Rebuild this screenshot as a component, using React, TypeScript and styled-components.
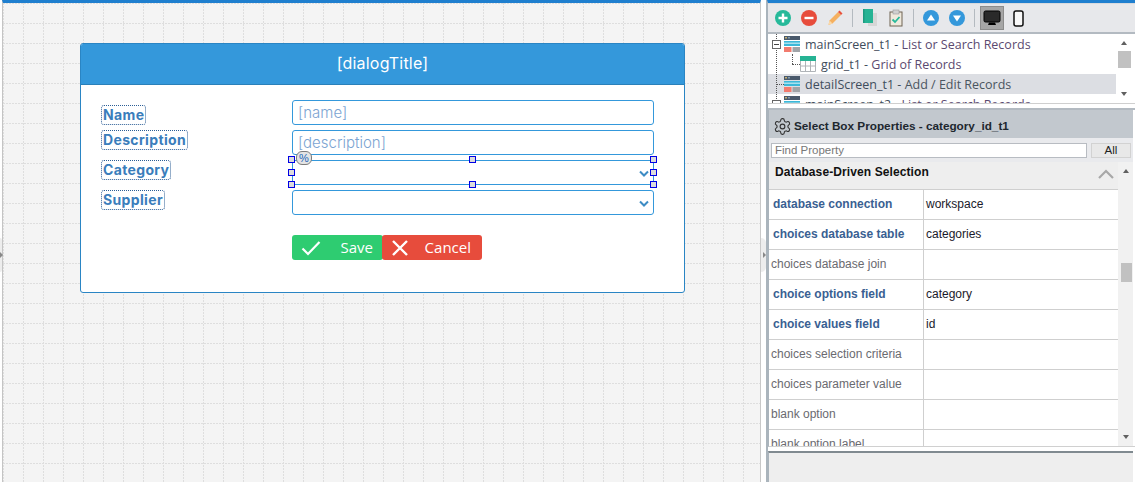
import React from "react";
import styled, { createGlobalStyle } from "styled-components";

const Global = createGlobalStyle`
  html, body { margin: 0; padding: 0; height: 482px; overflow: hidden; background: #fff; }
  #root { height: 482px; }
  * { box-sizing: border-box; }
`;

const Page = styled.div`
  position: relative;
  display: flex;
  width: 1135px;
  height: 482px;
  overflow: hidden;
  padding-left: 2px;
`;

const Canvas = styled.div`
  flex: 0 0 759px;
  height: 482px;
  padding: 40px 0 0 77px;
  border-left: 1px solid #c4c4c4;
  border-right: 1px solid #c8c8c8;
  border-top: 3px solid #1f7fcf;
  background-color: #f4f4f4;
  background-image:
    conic-gradient(at 2px 1px, transparent 270deg, #dedede 270deg),
    conic-gradient(at 1px 2px, transparent 270deg, #dedede 270deg);
  background-size: 3px 20px, 20px 3px;
  background-position: 0 0, 0 0;
`;

const Dialog = styled.div`
  width: 605px;
  height: 250px;
  background: #fff;
  border: 1px solid #2a85c4;
  border-radius: 3px;
`;

const DialogTitle = styled.div`
  height: 41px;
  background: #3498db;
  border-bottom: 1px solid #2a80b9;
  border-radius: 2px 2px 0 0;
  color: #fff;
  font: 400 16px/39px Inter, sans-serif;
  letter-spacing: 0.2px;
  text-align: center;
`;

const FormBody = styled.div`
  padding: 15px 30px 0 20px;
  display: flex;
  flex-direction: column;
`;

const FormRow = styled.div`
  display: grid;
  grid-template-columns: 191px 362px;
  height: 30px;
  align-items: start;
`;

const Label = styled.span<{ $top?: number }>`
  justify-self: start;
  height: 20px;
  margin-top: ${(p) => p.$top ?? 0}px;
  padding: 0 1px;
  border: 1px dotted #2c5e96;
  border-radius: 3px;
  color: #3a7dbb;
  font: 700 14px/18px Inter, sans-serif;
  letter-spacing: 0.35px;
`;

const Field = styled.div`
  position: relative;
  height: 25px;
  border: 1px solid #3498db;
  border-radius: 3px;
  padding-left: 5px;
  color: #7ba4d2;
  background: #fff;
  font: 300 15px/24px Inter, sans-serif;
`;

const Chevron = styled.svg`
  position: absolute;
  right: 4px;
  top: 50%;
  margin-top: -3px;
  width: 10px;
  height: 7px;
`;

const Handle = styled.i<{ $x: number; $y: number }>`
  position: absolute;
  left: ${(p) => p.$x}px;
  top: ${(p) => p.$y}px;
  margin: -3px 0 0 -3px;
  width: 7px;
  height: 7px;
  border: 1px solid #0000e6;
  background: #dcdcdc;
`;

const PercentBadge = styled.span`
  position: absolute;
  left: 3px;
  top: -10px;
  width: 16px;
  height: 14px;
  border: 1px solid #7c7c7c;
  border-radius: 6px;
  background: #e4e4e4;
  color: #2266bb;
  font: 400 11px/12px "Liberation Sans", sans-serif;
  text-align: center;
  z-index: 2;
`;

const Buttons = styled.div`
  display: flex;
  margin: 15px 0 0 191px;
`;

const FormButton = styled.button<{ $bg: string; $w: number; $pad: number; $overlap?: boolean }>`
  display: flex;
  align-items: center;
  justify-content: space-between;
  width: ${(p) => p.$w}px;
  height: 25px;
  margin-left: ${(p) => (p.$overlap ? -1 : 0)}px;
  padding: 0 ${(p) => p.$pad}px 0 9px;
  border: 0;
  border-radius: 3px;
  background: ${(p) => p.$bg};
  color: #fff;
  font: 400 15px/25px "Open Sans", sans-serif;
`;

const Splitter = styled.div`
  flex: 0 0 6px;
  height: 482px;
  background: #fff;
  border-right: 1px solid #aab4bc;
`;

const SplitTab = styled.span<{ $left: number; $w: number }>`
  position: absolute;
  left: ${(p) => p.$left}px;
  top: 238px;
  width: ${(p) => p.$w}px;
  height: 34px;
  border-radius: 0 5px 5px 0;
  background: #ededed;
  &::after {
    content: "";
    position: absolute;
    left: ${(p) => (p.$w > 3 ? 2 : 0)}px;
    top: 14px;
    border-left: 3px solid #888;
    border-top: 3px solid transparent;
    border-bottom: 3px solid transparent;
  }
`;

const Side = styled.div`
  flex: 0 0 368px;
  height: 482px;
  display: flex;
  flex-direction: column;
  border-left: 1px solid #aab4bc;
  border-top: 3px solid #1f7fcf;
`;

const Toolbar = styled.div`
  height: 31px;
  flex: none;
  display: flex;
  align-items: center;
  padding-left: 6px;
  background: #e7e8eb;
  border-bottom: 2px solid #b3bac1;
  border-top: 1px solid #d8dade;
`;

const ToolIcon = styled.span<{ $w: number }>`
  flex: 0 0 ${(p) => p.$w}px;
  height: 24px;
  display: flex;
  align-items: center;
  justify-content: center;
`;

const ToolSep = styled.span<{ $r: number }>`
  flex: none;
  width: 1px;
  height: 18px;
  margin: 0 ${(p) => p.$r}px 0 8px;
  background: #b4bac0;
`;

const ActiveTool = styled.span`
  flex: 0 0 24px;
  height: 24px;
  display: flex;
  align-items: center;
  justify-content: center;
  background: #a6a6a6;
  border: 1px solid #8c8c8c;
`;

const TreeWrap = styled.div`
  position: relative;
  height: 69px;
  flex: none;
  overflow: hidden;
  background: #fff;
  padding-right: 18px;
`;

const TreeRow = styled.div<{ $selected?: boolean; $indent: number }>`
  position: relative;
  height: 20px;
  display: flex;
  align-items: center;
  gap: 5px;
  padding-left: ${(p) => p.$indent}px;
  background: ${(p) => (p.$selected ? "#dcdee3" : "transparent")};
  color: #3f4d5c;
  font: 400 12.5px/20px "Open Sans", sans-serif;
  white-space: nowrap;
  & > svg { flex: none; }
  & > span:last-child { margin-top: 2px; }
`;

const TreeDesc = styled.span<{ $purple?: boolean }>`
  color: ${(p) => (p.$purple ? "#5b4a70" : "#4a5560")};
`;

const ExpandBox = styled.span`
  position: absolute;
  left: 4px;
  top: 6px;
  width: 9px;
  height: 9px;
  border: 1px solid #666;
  background: #fff;
  z-index: 1;
  &::after {
    content: "";
    position: absolute;
    left: 1px;
    top: 3px;
    width: 5px;
    height: 1px;
    background: #444;
  }
`;

const DotV = styled.span`
  position: absolute;
  left: 8px;
  top: 0;
  bottom: 0;
  border-left: 1px dotted #555;
  z-index: 1;
`;

const DotH = styled.span<{ $left: number; $w: number }>`
  position: absolute;
  left: ${(p) => p.$left}px;
  top: 10px;
  width: ${(p) => p.$w}px;
  border-top: 1px dotted #555;
`;

const DotElbow = styled.span`
  position: absolute;
  left: 24px;
  top: 0;
  height: 10px;
  border-left: 1px dotted #555;
`;

const Scrollbar = styled.div<{ $bg: string; $width: number }>`
  position: absolute;
  top: 0;
  right: 2px;
  bottom: 0;
  width: ${(p) => p.$width}px;
  background: ${(p) => p.$bg};
`;

const ScrollThumb = styled.div<{ $top: number; $h: number; $l: number; $r: number }>`
  position: absolute;
  left: ${(p) => p.$l}px;
  right: ${(p) => p.$r}px;
  top: ${(p) => p.$top}px;
  height: ${(p) => p.$h}px;
  background: #c1c1c1;
`;

const ArrowUp = styled.span`
  position: absolute;
  left: 5px;
  top: 7px;
  border: 3.5px solid transparent;
  border-top: 0;
  border-bottom: 4px solid #606060;
`;

const ArrowDown = styled.span`
  position: absolute;
  left: 5px;
  bottom: 7px;
  border: 3.5px solid transparent;
  border-bottom: 0;
  border-top: 4px solid #606060;
`;

const Gap = styled.div`
  height: 7px;
  flex: none;
  background: #fff;
  border-top: 1px solid #cfcfcf;
  border-bottom: 2px solid #b3bac1;
`;

const PropsHeader = styled.div`
  flex: none;
  height: 28px;
  display: flex;
  align-items: center;
  gap: 2px;
  padding: 4px 0 0 4px;
  margin-right: 2px;
  background: #c2c8ce;
  border-left: 1px solid #aab4bc;
  color: #20272e;
  font: 700 11.75px/24px "Liberation Sans", sans-serif;
`;

const FindRow = styled.div`
  flex: none;
  height: 24px;
  display: flex;
  align-items: center;
  gap: 4px;
  padding-left: 2px;
  margin-right: 2px;
  background: #e9eaed;
  border-left: 1px solid #aab4bc;
`;

const FindInput = styled.div`
  width: 316px;
  height: 15px;
  border: 1px solid #b8bcc2;
  background: #fff;
  color: #777;
  padding-left: 3px;
  font: 400 11.5px/13px "Liberation Sans", sans-serif;
`;

const AllButton = styled.div`
  width: 40px;
  height: 15px;
  background: #e8e8e8;
  border: 1px solid #d2d2d2;
  color: #222;
  text-align: center;
  font: 400 11.5px/13px "Liberation Sans", sans-serif;
`;

const PropsArea = styled.div`
  position: relative;
  height: 285px;
  flex: none;
  overflow: hidden;
  border-left: 1px solid #aab4bc;
  padding-right: 16px;
  border-bottom: 1px solid #d0d0d0;
`;

const SectionHead = styled.div`
  position: relative;
  height: 28px;
  padding-left: 6px;
  background: #eeeeee;
  color: #111;
  font: 700 12px/20px "Liberation Sans", sans-serif;
  border-bottom: 1px solid #cfcfcf;
  border-right: 1px solid #cfcfcf;
  letter-spacing: 0.1px;
`;

const Collapse = styled.svg`
  position: absolute;
  right: 3px;
  top: 6px;
  width: 18px;
  height: 12px;
`;

const PropRow = styled.div`
  display: grid;
  grid-template-columns: 155px 1fr;
  height: 30px;
  background: #fff;
  border-bottom: 1px solid #cfcfcf;
  border-right: 1px solid #cfcfcf;
`;

const PropName = styled.div<{ $set?: boolean }>`
  padding-left: ${(p) => (p.$set ? 4 : 2)}px;
  border-right: 1px solid #cfcfcf;
  color: ${(p) => (p.$set ? "#3a5f92" : "#6a6a70")};
  font: ${(p) => (p.$set ? 700 : 400)} 12px/29px "Liberation Sans", sans-serif;
  white-space: nowrap;
`;

const PropValue = styled.div`
  padding-left: 2px;
  color: #1a1a2a;
  font: 400 12px/29px "Liberation Sans", sans-serif;
`;

const Footer = styled.div`
  flex: 1;
  margin: 4px 2px 0 0;
  background: #eeeeee;
  border-top: 2px solid #808a90;
  border-left: 1px solid #aab4bc;
`;

const Round = ({ color, children }: { color: string; children: React.ReactNode }) => (
  <svg width="18" height="18" viewBox="0 0 18 18">
    <circle cx="9" cy="9" r="8" fill={color} />
    {children}
  </svg>
);

const ScreenIcon = () => (
  <svg width="16" height="16" viewBox="0 0 16 16">
    <rect x="0" y="0" width="16" height="4" fill="#4a5a6c" />
    <rect x="1" y="1" width="2" height="1.5" fill="#c8b070" />
    <rect x="4" y="1" width="2" height="1.5" fill="#7f9ab0" />
    <rect x="0" y="5" width="16" height="5" fill="#3cb8d8" />
    <rect x="0" y="6.5" width="16" height="1.5" fill="#a8e0ee" />
    <rect x="0" y="11" width="7.5" height="5" fill="#f27b6e" />
    <rect x="8.5" y="11" width="7.5" height="5" fill="#a0a4a8" />
  </svg>
);

const GridIcon = () => (
  <svg width="16" height="16" viewBox="0 0 16 16">
    <rect x="0" y="0" width="16" height="5" fill="#26b394" />
    <path d="M.5 5v10.5h15V5M.5 10h15M5.5 5v10.5M10.5 5v10.5" fill="none" stroke="#b0b4b8" />
  </svg>
);

const ChevronIcon = () => (
  <Chevron viewBox="0 0 10 7">
    <path d="M1 1.5 5 5.5 9 1.5" fill="none" stroke="#3d8cc4" strokeWidth="2" />
  </Chevron>
);

const handles = [
  [-2, -2], [179, -2], [360, -2],
  [-2, 11], [360, 11],
  [-2, 23], [179, 23], [360, 23],
];

const props: [string, string, boolean][] = [
  ["database connection", "workspace", true],
  ["choices database table", "categories", true],
  ["choices database join", "", false],
  ["choice options field", "category", true],
  ["choice values field", "id", true],
  ["choices selection criteria", "", false],
  ["choices parameter value", "", false],
  ["blank option", "", false],
  ["blank option label", "", false],
];

export default function App() {
  return (
    <Page>
      <Global />
      <SplitTab $left={0} $w={2} />
      <Canvas>
        <Dialog>
          <DialogTitle>[dialogTitle]</DialogTitle>
          <FormBody>
            <FormRow>
              <Label $top={5}>Name</Label>
              <Field>[name]</Field>
            </FormRow>
            <FormRow>
              <Label>Description</Label>
              <Field>[description]</Field>
            </FormRow>
            <FormRow>
              <Label>Category</Label>
              <Field>
                <ChevronIcon />
                <PercentBadge>%</PercentBadge>
                {handles.map(([x, y]) => (
                  <Handle key={`${x}-${y}`} $x={x} $y={y} />
                ))}
              </Field>
            </FormRow>
            <FormRow>
              <Label>Supplier</Label>
              <Field>
                <ChevronIcon />
              </Field>
            </FormRow>
            <Buttons>
              <FormButton $bg="#2ecc71" $w={91} $pad={10}>
                <svg width="20" height="16" viewBox="0 0 20 16">
                  <path d="M1.5 8.5 7 14 18.5 2" fill="none" stroke="#fff" strokeWidth="2.2" />
                </svg>
                Save
              </FormButton>
              <FormButton $bg="#e74c3c" $w={100} $pad={11} $overlap>
                <svg width="18" height="16" viewBox="0 0 18 16">
                  <path d="M2 1 16 15M16 1 2 15" fill="none" stroke="#fff" strokeWidth="2.4" />
                </svg>
                Cancel
              </FormButton>
            </Buttons>
          </FormBody>
        </Dialog>
      </Canvas>
      <Splitter />
      <SplitTab $left={761} $w={5} />
      <Side>
        <Toolbar>
          <ToolIcon $w={18}>
            <Round color="#26b99a">
              <path d="M9 4.5v9M4.5 9h9" stroke="#fff" strokeWidth="2.4" />
            </Round>
          </ToolIcon>
          <ToolIcon $w={8} />
          <ToolIcon $w={18}>
            <Round color="#e74c3c">
              <path d="M4.5 9h9" stroke="#fff" strokeWidth="2.4" />
            </Round>
          </ToolIcon>
          <ToolIcon $w={8} />
          <ToolIcon $w={18}>
            <svg width="18" height="18" viewBox="0 0 18 18">
              <path d="M2.5 16 3.5 11.5 12 3 15 6 6.5 14.5Z" fill="#f5b060" />
              <path d="M12 3 13.5 1.5 16.5 4.5 15 6Z" fill="#e8503c" />
              <path d="M2.5 16 3.5 11.5 6.5 14.5Z" fill="#fbd9a8" />
            </svg>
          </ToolIcon>
          <ToolSep $r={7} />
          <ToolIcon $w={18}>
            <svg width="18" height="18" viewBox="0 0 18 18">
              <rect x="8" y="4" width="9" height="13" fill="#d6d6d6" />
              <rect x="3" y="0" width="10" height="14" fill="#26b394" />
              <rect x="3" y="0" width="1.5" height="14" fill="#1c9a80" />
            </svg>
          </ToolIcon>
          <ToolIcon $w={9} />
          <ToolIcon $w={18}>
            <svg width="16" height="18" viewBox="0 0 16 18">
              <rect x="2" y="3" width="12" height="14" fill="#efe9dd" stroke="#6f6252" />
              <rect x="5" y="1" width="6" height="4" fill="#d0d0d0" stroke="#999" strokeWidth=".6" />
              <path d="M4.5 10.5 7 13 11.5 8" fill="none" stroke="#26b99a" strokeWidth="1.8" />
            </svg>
          </ToolIcon>
          <ToolSep $r={8} />
          <ToolIcon $w={18}>
            <Round color="#3498db">
              <path d="M9 5.5 13 11.5H5Z" fill="#fff" />
            </Round>
          </ToolIcon>
          <ToolIcon $w={8} />
          <ToolIcon $w={18}>
            <Round color="#3498db">
              <path d="M9 12.5 13 6.5H5Z" fill="#fff" />
            </Round>
          </ToolIcon>
          <ToolSep $r={5} />
          <ActiveTool>
            <svg width="18" height="16" viewBox="0 0 18 16">
              <rect x="1" y="1" width="16" height="11" rx="1.5" fill="#2a2a2a" stroke="#000" />
              <path d="M6 12.5h6l1 2.5H5Z" fill="#000" />
            </svg>
          </ActiveTool>
          <ToolIcon $w={28}>
            <svg width="11" height="17" viewBox="0 0 11 17">
              <rect x="1" y="1" width="9" height="15" rx="2" fill="#f8f8f8" stroke="#111" strokeWidth="1.5" />
            </svg>
          </ToolIcon>
        </Toolbar>
        <TreeWrap>
          <DotV />
          <TreeRow $indent={16}>
            <ExpandBox />
            <ScreenIcon />
            <span>
              mainScreen_t1 - <TreeDesc $purple>List or Search Records</TreeDesc>
            </span>
          </TreeRow>
          <TreeRow $indent={32}>
            <DotElbow />
            <DotH $left={24} $w={8} />
            <GridIcon />
            <span>
              grid_t1 - <TreeDesc $purple>Grid of Records</TreeDesc>
            </span>
          </TreeRow>
          <TreeRow $selected $indent={16}>
            <DotH $left={9} $w={7} />
            <ScreenIcon />
            <span>
              detailScreen_t1 - <TreeDesc>Add / Edit Records</TreeDesc>
            </span>
          </TreeRow>
          <TreeRow $indent={16}>
            <ExpandBox />
            <ScreenIcon />
            <span>
              mainScreen_t2 - <TreeDesc $purple>List or Search Records</TreeDesc>
            </span>
          </TreeRow>
          <Scrollbar $bg="#fff" $width={17}>
            <ArrowUp />
            <ScrollThumb $top={17} $h={17} $l={2} $r={2} />
            <ArrowDown />
          </Scrollbar>
        </TreeWrap>
        <Gap />
        <PropsHeader>
          <svg width="19" height="19" viewBox="0 0 24 24" fill="none" stroke="#333" strokeWidth="1.4">
            <path d="M12.22 2h-.44a2 2 0 0 0-2 2v.18a2 2 0 0 1-1 1.73l-.43.25a2 2 0 0 1-2 0l-.15-.08a2 2 0 0 0-2.73.73l-.22.38a2 2 0 0 0 .73 2.73l.15.1a2 2 0 0 1 1 1.72v.51a2 2 0 0 1-1 1.74l-.15.09a2 2 0 0 0-.73 2.73l.22.38a2 2 0 0 0 2.73.73l.15-.08a2 2 0 0 1 2 0l.43.25a2 2 0 0 1 1 1.73V20a2 2 0 0 0 2 2h.44a2 2 0 0 0 2-2v-.18a2 2 0 0 1 1-1.73l.43-.25a2 2 0 0 1 2 0l.15.08a2 2 0 0 0 2.73-.73l.22-.39a2 2 0 0 0-.73-2.73l-.15-.08a2 2 0 0 1-1-1.74v-.5a2 2 0 0 1 1-1.74l.15-.09a2 2 0 0 0 .73-2.73l-.22-.38a2 2 0 0 0-2.73-.73l-.15.08a2 2 0 0 1-2 0l-.43-.25a2 2 0 0 1-1-1.73V4a2 2 0 0 0-2-2z" />
            <circle cx="12" cy="12" r="3" />
          </svg>
          Select Box Properties - category_id_t1
        </PropsHeader>
        <FindRow>
          <FindInput>Find Property</FindInput>
          <AllButton>All</AllButton>
        </FindRow>
        <PropsArea>
          <SectionHead>
            Database-Driven Selection
            <Collapse viewBox="0 0 18 12">
              <path d="M2 10 9 3 16 10" fill="none" stroke="#a8a8a8" strokeWidth="2.2" />
            </Collapse>
          </SectionHead>
          {props.map(([name, value, set]) => (
            <PropRow key={name}>
              <PropName $set={set}>{name}</PropName>
              <PropValue>{value}</PropValue>
            </PropRow>
          ))}
          <Scrollbar $bg="#f1f1f1" $width={15}>
            <ArrowUp />
            <ScrollThumb $top={101} $h={19} $l={3} $r={1} />
            <ArrowDown />
          </Scrollbar>
        </PropsArea>
        <Footer />
      </Side>
    </Page>
  );
}
